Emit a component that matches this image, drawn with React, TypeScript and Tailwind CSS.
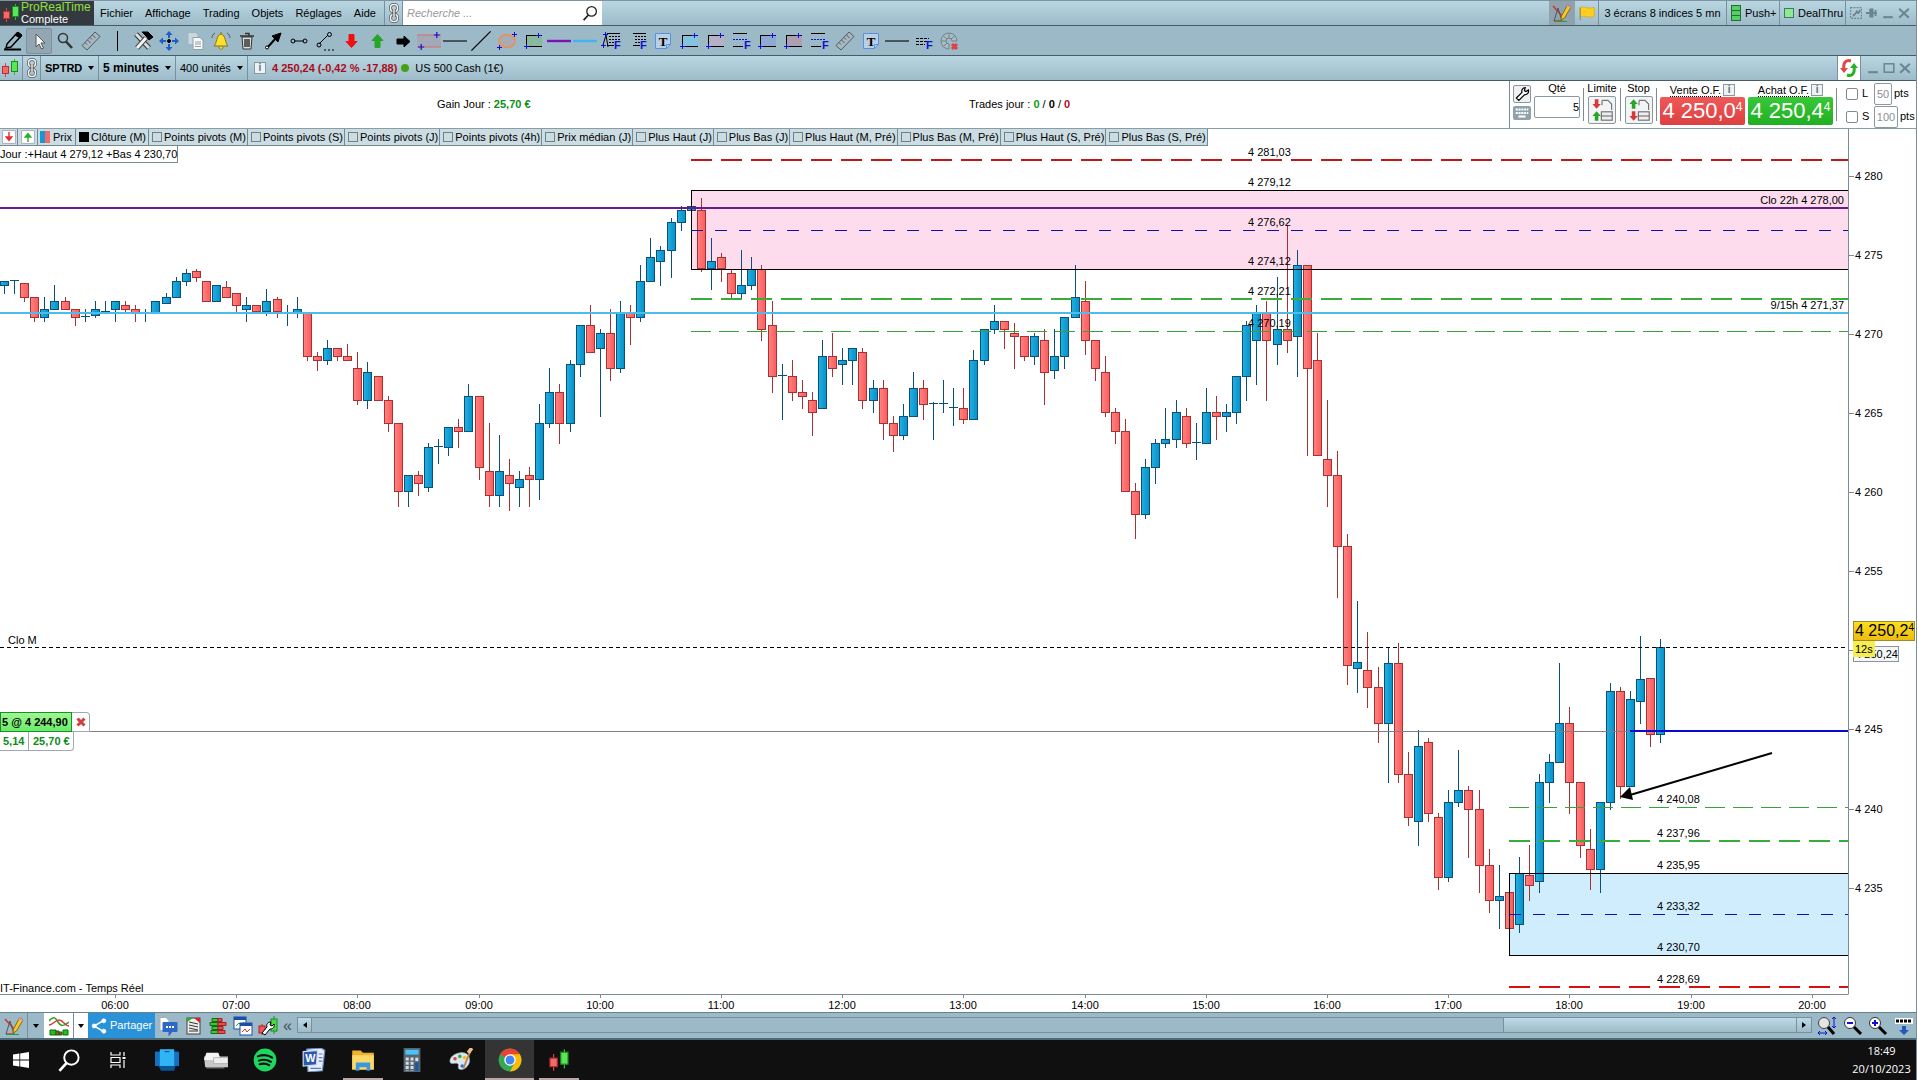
import type { ReactNode } from "react";

/* ---------- chart data ---------- */

interface Candle {
  up: boolean;
  high: number;
  top: number;
  bottom: number;
  low: number;
}

// Each entry: direction, high, body top, body bottom, low (in thirds of a pixel below the origin)
const SESSIONS = [
  {
    origin: 44,
    bars: `B 273 273 287 311,B 273 274 274 311,R 279 279 323 335,R 321 321 383 395,B 321 357 383 395,B 285 333 359 359,
R 321 333 359 359,R 357 357 383 407,B 357 382 382 395,B 333 357 377 383,B 333 365 365 365,B 333 333 359 395,
R 333 345 359 365,R 345 357 368 395,B 357 368 368 395,B 333 333 368 368,B 309 321 341 341,B 261 273 323 323,
B 237 249 275 287,R 237 243 263 275,R 273 273 335 335,B 285 285 335 335,R 273 291 323 323,R 309 309 347 367,
B 321 345 359 395,R 345 345 367 367,B 297 333 367 377,R 321 327 367 383,B 345 369 369 407,B 321 357 369 383,
R 369 370 500 512,R 486 498 512 542,B 450 474 512 524,R 474 474 500 512,R 462 498 512 512,R 486 534 632 644,
B 516 546 632 656,R 558 558 632 632,R 618 630 701 725,R 699 699 905 950,B 855 855 905 950,R 843 855 881 917,
B 759 771 893 905,B 747 772 772 822,B 711 711 773 797,R 687 711 725 773,B 582 618 725 725,R 618 618 833 869,
R 699 843 917 950,B 735 843 917 950,R 807 855 881 962,B 843 867 893 950,R 831 855 869 950,B 642 699 869 929,
B 534 606 701 713,R 582 606 701 761,B 510 522 701 725,B 405 405 524 560,R 345 405 488 488,B 417 429 476 680,
R 357 429 536 572,B 333 369 536 548,R 345 369 383 464,B 225 273 383 395,B 144 201 275 275`,
  },
  {
    origin: 4,
    bars: `B 288 300 335 407,B 204 216 302 383,B 168 180 218 242,B 168 168 182 182,R 144 180 358 365,B 264 333 358 419,
R 309 321 358 395,R 359 369 431 444,B 300 405 431 444,B 321 358 407 419,R 345 358 539 572,R 453 525 680 728,
B 642 679 679 809,R 630 678 728 752,R 690 726 740 776,R 726 750 788 857,B 570 618 776 776,R 549 618 656 680,
B 594 630 644 704,B 594 594 632 704,R 594 606 752 776,B 690 714 752 788,R 690 714 821 869,R 798 819 857 905,
B 762 798 857 869,B 666 714 800 800,R 690 714 764 809,B 756 763 763 869,B 690 763 763 788,B 714 774 774 827,
R 714 774 809 821,B 600 630 809 809,B 537 537 632 644,B 465 513 539 551,R 513 513 539 596,R 519 549 560 656,
R 558 558 620 632,B 549 558 620 644,R 537 570 668 764,B 537 618 662 686,B 501 501 620 656,B 345 441 503 503,
R 393 453 572 614,R 570 570 656 692,R 618 666 788 800,R 774 786 845 881,R 807 843 1025 1025,R 999 1023 1094 1166,
B 927 951 1094 1106,B 867 879 953 1001,B 774 867 881 893,B 750 786 869 893,R 774 798 881 893,B 819 880 880 929,
B 714 786 881 881,R 738 786 800 869,B 762 786 800 845,B 678 678 788 821,B 513 525 680 752,B 465 489 572 704,
R 453 489 572 752,B 381 537 584 644,R 225 537 572 608,B 300 345 560 680,R 345 345 656 917,R 549 630 917 917,
R 750 927 977 1070,R 903 975 1190 1343,R 1152 1188 1547 1605`,
  },
  {
    origin: 394,
    bars: `B 182 366 386 459,R 276 390 443 503,R 380 441 551 608,B 321 369 551 728,R 309 369 704 728,R 636 702 833 857,
B 570 618 845 917,R 594 606 821 845,R 819 831 1013 1049,B 750 786 1013 1025,B 630 750 788 800,R 738 750 809 953,
R 750 807 977 1058,R 927 975 1082 1118,B 975 1068 1082 1166,R 1056 1056 1166 1166,B 951 1000 1154 1178,
R 915 1005 1037 1082,B 702 726 1025 1058,B 642 666 728 788,B 369 549 668 668,R 501 549 728 821,R 726 726 917 953,
R 867 927 989 1049,B 786 786 989 1058,B 429 453 788 809,R 441 453 740 776,B 453 477 740 740,B 288 417 485 551,
R 414 414 584 620,B 297 321 584 608`,
  },
];

const CANDLES: Candle[] = SESSIONS.flatMap(({ origin, bars }) =>
  bars.split(",").map((bar) => {
    const [dir, ...values] = bar.trim().split(" ");
    const [high, top, bottom, low] = values.map((v) => Math.round(origin + Number(v) / 3));
    return { up: dir === "B", high, top, bottom, low };
  })
);

const PX_PER_POINT = 15.805;
const priceY = (price: number) => Math.round((4280 - price) * PX_PER_POINT + 30.3);
const candleX = (i: number) => Math.floor(4.4 + i * 10.1);

const PRICE_TICKS = [4280, 4275, 4270, 4265, 4260, 4255, 4250, 4245, 4240, 4235];
const HOURS = ["06:00", "07:00", "08:00", "09:00", "10:00", "11:00", "12:00", "13:00", "14:00", "15:00", "16:00", "17:00", "18:00", "19:00", "20:00"];

interface Level {
  price: number;
  label: string;
  color: string;
  width: number;
  dash?: string;
}

const UPPER_LEVELS: Level[] = [
  { price: 4281.03, label: "4 281,03", color: "#c01818", width: 2, dash: "21 9" },
  { price: 4279.12, label: "4 279,12", color: "#000", width: 1 },
  { price: 4276.62, label: "4 276,62", color: "#1010b0", width: 1, dash: "12 12" },
  { price: 4274.12, label: "4 274,12", color: "#000", width: 1 },
  { price: 4272.21, label: "4 272,21", color: "#3aac3a", width: 2, dash: "21 9" },
  { price: 4270.19, label: "4 270,19", color: "#3aa03a", width: 1, dash: "20 8" },
];

const LOWER_LEVELS: Level[] = [
  { price: 4240.08, label: "4 240,08", color: "#3aa03a", width: 1, dash: "20 8" },
  { price: 4237.96, label: "4 237,96", color: "#3aac3a", width: 2, dash: "21 9" },
  { price: 4235.95, label: "4 235,95", color: "#000", width: 1 },
  { price: 4233.32, label: "4 233,32", color: "#1010b0", width: 1, dash: "12 12" },
  { price: 4230.7, label: "4 230,70", color: "#000", width: 1 },
  { price: 4228.69, label: "4 228,69", color: "#d81010", width: 2, dash: "21 9" },
];

/* ---------- chart ---------- */

const CandleShape = ({ candle, x }: { candle: Candle; x: number }) => {
  const line = candle.up ? "#0b5078" : "#a83232";
  return (
    <g stroke={line}>
      <line x1={x + 0.5} x2={x + 0.5} y1={candle.high} y2={candle.low} />
      {candle.top === candle.bottom ? (
        <line x1={x - 4} x2={x + 5} y1={candle.top - 0.5} y2={candle.top - 0.5} />
      ) : (
        <rect
          x={x - 3.5}
          y={candle.top + 0.5}
          width={8}
          height={Math.max(2, candle.bottom - candle.top - 1)}
          fill={candle.up ? "url(#up)" : "url(#down)"}
        />
      )}
    </g>
  );
};

const Levels = ({ levels, x, labelX }: { levels: Level[]; x: number; labelX: number }) => (
  <>
    {levels.map(({ price, label, color, width, dash }) => {
      const y = priceY(price) + (width === 1 ? 0.5 : 0);
      return (
        <g key={label}>
          <line x1={x} x2="100%" y1={y} y2={y} stroke={color} strokeWidth={width} strokeDasharray={dash} />
          <text x={labelX} y={priceY(price) - 4}>
            {label}
          </text>
        </g>
      );
    })}
  </>
);

const PricePlot = () => (
  <svg className="block min-h-0 w-full flex-1 text-[11px]">
    <defs>
      <linearGradient id="up">
        <stop offset="0" stopColor="#22b0e2" />
        <stop offset="1" stopColor="#0690c8" />
      </linearGradient>
      <linearGradient id="down">
        <stop offset="0" stopColor="#ff8282" />
        <stop offset="1" stopColor="#fb5c5c" />
      </linearGradient>
    </defs>
    <rect x={691} y={priceY(4279.12)} width="100%" height={priceY(4274.12) - priceY(4279.12)} fill="#fddcee" />
    <rect x={1509} y={priceY(4235.95)} width="100%" height={priceY(4230.7) - priceY(4235.95)} fill="#cfedfd" />
    {CANDLES.map((candle, i) => (
      <CandleShape key={i} candle={candle} x={candleX(i)} />
    ))}
    <line x1={691.5} x2={691.5} y1={priceY(4279.12)} y2={priceY(4274.12)} stroke="#000" />
    <line x1={1509.5} x2={1509.5} y1={priceY(4235.95)} y2={priceY(4230.7)} stroke="#000" />
    <Levels levels={UPPER_LEVELS} x={691} labelX={1248} />
    <Levels levels={LOWER_LEVELS} x={1509} labelX={1657} />
    <line x1="0" x2="100%" y1={priceY(4278)} y2={priceY(4278)} stroke="#6a1a8a" strokeWidth="2" />
    <line x1="0" x2="100%" y1={priceY(4271.37)} y2={priceY(4271.37)} stroke="#4cbcec" strokeWidth="2" />
    <line x1="0" x2="100%" y1="501.5" y2="501.5" stroke="#000" strokeDasharray="4 3" />
    <line x1="0" x2="100%" y1="585.5" y2="585.5" stroke="#808080" />
    <line x1="1630" x2="100%" y1="585" y2="585" stroke="#0808d8" strokeWidth="2" />
    <line x1="1772" y1="607" x2="1630" y2="649" stroke="#000" strokeWidth="2" />
    <path d="M1620 651l10-10 3 13z" />
    <text x="8" y="498">
      Clo M
    </text>
    <svg x="100%" className="overflow-visible" textAnchor="end">
      <text x="-4" y="58">
        Clo 22h 4 278,00
      </text>
      <text x="-4" y="163">
        9/15h 4 271,37
      </text>
    </svg>
  </svg>
);

const PriceAxis = () => (
  <div className="relative flex w-[68px] flex-col border-b border-l border-[#7c8c92] border-b-white text-[11px]">
    <svg className="block min-h-0 w-full flex-1">
      {PRICE_TICKS.map((price) => {
        const y = priceY(price) + 17;
        return (
          <g key={price}>
            <line x1="0" x2="5" y1={y + 0.5} y2={y + 0.5} stroke="#7c8c92" />
            {price !== 4250 && (
              <text x="6" y={y + 4}>
                {`4 ${price - 4000}`}
              </text>
            )}
          </g>
        );
      })}
    </svg>
    <div className="absolute top-[517px] left-1 flex h-4 w-[46px] justify-end border border-[#8c9498] bg-[#f4f6f8] leading-[14px] whitespace-nowrap">4 250,24</div>
    <div className="absolute top-[512px] left-1 h-4 w-[22px] bg-[#f6ee50] pl-0.5 leading-4">12s</div>
    <div className="absolute top-[492px] left-1 flex h-5 w-[62px] border border-[#9a8a30] bg-linear-to-b from-[#fbe01c] to-[#eebc10] pl-px text-base leading-[18px]">
      4 250,2<span className="text-[10px] leading-3">4</span>
    </div>
  </div>
);

const TimeAxis = () => (
  <div className="h-[18px] shrink-0 border-b border-[#6c8088] bg-white">
    <svg className="block h-full w-full text-[11px]" textAnchor="middle">
      {HOURS.map((hour, i) => {
        const x = candleX(11 + i * 12);
        return (
          <g key={hour}>
            <line x1={x + 0.5} x2={x + 0.5} y1="0" y2="3" stroke="#7c8c92" />
            <text x={x} y="14">
              {hour}
            </text>
          </g>
        );
      })}
    </svg>
  </div>
);

/* ---------- icons ---------- */

const Svg = ({ children, size = "h-5 w-5" }: { children: ReactNode; size?: string }) => (
  <svg viewBox="0 0 20 20" fill="none" stroke="#000" className={`${size} shrink-0`}>
    {children}
  </svg>
);

const CandlesIcon = ({ size }: { size?: string }) => (
  <Svg size={size}>
    <path d="M5.5 5v14" stroke="#e04040" />
    <path d="M14.5 1v16" stroke="#30b830" />
    <rect x="2.5" y="8.5" width="6" height="7" fill="#f46a6a" stroke="#b83030" />
    <rect x="11.5" y="3.5" width="6" height="10" fill="#5ae65a" stroke="#1c8c1c" />
  </Svg>
);

const ChainIcon = () => (
  <svg viewBox="0 0 12 20" fill="none" className="h-5 w-3 shrink-0">
    <rect x="2.5" y="1.5" width="7" height="7" rx="3" stroke="#555" strokeWidth="3" />
    <rect x="2.5" y="11.5" width="7" height="7" rx="3" stroke="#555" strokeWidth="3" />
    <rect x="2.5" y="1.5" width="7" height="7" rx="3" stroke="#f2f2f2" strokeWidth="1.5" />
    <rect x="2.5" y="11.5" width="7" height="7" rx="3" stroke="#f2f2f2" strokeWidth="1.5" />
    <path d="M6 6v8" stroke="#444" strokeWidth="3" />
    <path d="M6 6v8" stroke="#eee" strokeWidth="1.5" />
  </svg>
);

const DrawIcon = () => (
  <Svg>
    <path d="M1 3l10 11M2 18h8" stroke="#d83030" strokeWidth="1.5" />
    <path d="M2 18L6 5l4 13" stroke="#555" />
    <path d="M2 18.5h13" stroke="#20a040" />
    <path d="M15.5 2l3.5 2-6.5 11-3.500 2 .5-4z" fill="#f8c828" stroke="#8a6a10" />
    <path d="M15.5 2l3.5 2-1 1.500L14.500 4z" fill="#f0a0a0" stroke="none" />
  </Svg>
);

const RulerIcon = () => (
  <Svg>
    <path d="M1 14.5L14 1l5 4.500L6 19z" fill="#a8b8c0" stroke="#4f5c64" />
    <path d="M4 11.5l2 2M6.500 9l3 3M9 6.500l2 2M11.500 4l3 3" stroke="#4f5c64" />
  </Svg>
);

const TextNoteIcon = () => (
  <Svg>
    <path d="M2.5 2.500h15v11l-4 4h-11z" fill="#b9cfe6" stroke="#5a90e0" />
    <path d="M13.5 17.500v-4h4" stroke="#5a90e0" />
    <text x="10" y="14.5" textAnchor="middle" fontSize="13" fontWeight="bold" fill="#000" stroke="none" fontFamily="Liberation Serif, serif">
      T
    </text>
  </Svg>
);

const BoxIcon = ({ fill }: { fill: string }) => (
  <Svg>
    <rect x="3" y="4" width="16" height="11" fill={fill} stroke="none" />
    <path d="M3 4.5h16M3 15.500h16M3.500 4v9" />
    <path d="M3.5 13v5M1 15.500h5M15.500 2v5M13 4.500h5" stroke="#1010d0" />
  </Svg>
);

const FMark = () => (
  <text x="13" y="18" fontSize="11" fontWeight="bold" fill="#1010d0" stroke="none">
    F
  </text>
);

const LinesFIcon = () => (
  <Svg>
    <path d="M2 2.5h14M2 15.500h10" />
    <path d="M2 8.5h15" stroke="#1010d0" strokeDasharray="2 1" />
    <FMark />
  </Svg>
);

const TextFIcon = ({ anchor }: { anchor?: boolean }) => (
  <Svg>
    <path d="M6 2.5h13M6 14.500h7" />
    <path d="M8 5.5h11M8 8.500h11M8 11.500h5" strokeDasharray="2 1" />
    {anchor && <path d="M2 14l3-10 2 12" />}
    {anchor && <path d="M2.5 12v5M0 14.500h5M4.500 1v5M2 3.500h5" stroke="#1010d0" />}
    <FMark />
  </Svg>
);

const BlockArrow = ({ fill, d }: { fill: string; d: string }) => (
  <Svg>
    <path d={d} fill={fill} stroke={fill} />
  </Svg>
);

const Stroke = ({ color, width }: { color: string; width: number }) => (
  <Svg size="h-6 w-6">
    <path d="M0 10h20" stroke={color} strokeWidth={width} />
  </Svg>
);

const DRAW_TOOLS: [string, ReactNode][] = [
  ["Crayon", <Svg><path d="M4 13L14 2l4 3L8 16l-5 1z" fill="#9bbac8" strokeWidth="1.5" /><path d="M12 4l3-3 4 3-2 3z" fill="#000" /><path d="M1 18.5h17" strokeWidth="2" /></Svg>],
  ["Curseur", <Svg><path d="M7 3v13l3-3 2.500 5 2-1-2.500-5h4z" fill="#f4f4f4" stroke="#555" /></Svg>],
  ["Loupe", <Svg><circle cx="8" cy="7" r="4.5" stroke="#333" strokeWidth="1.5" /><path d="M11 10.5l6 6.500" stroke="#333" strokeWidth="2.5" /></Svg>],
  ["Règle", <RulerIcon />],
  ["Séparateur", <Svg><path d="M10.5 0v20" /></Svg>],
  ["Outils", <Svg><path d="M3 3l13 14" stroke="#333" strokeWidth="5" /><path d="M3 3l13 14" stroke="#ddd" strokeWidth="3" /><path d="M13 7L4 17" stroke="#444" strokeWidth="5" /><path d="M13 7L4 17" stroke="#f4f4f4" strokeWidth="3" /><path d="M9 1h6l5 5-4 3-3-4z" fill="#000" /></Svg>],
  ["Déplacer", <Svg><path d="M10 7V3M10 13v4M7 10H3M13 10h4" stroke="#1a60c8" strokeWidth="2" /><path d="M10 0l3.500 4h-7zM10 20l3.500-4h-7zM0 10l4-3.500v7zM20 10l-4-3.500v7z" fill="#1a60c8" stroke="none" /><circle cx="10" cy="10" r="1.5" fill="#000" /></Svg>],
  ["Copier", <Svg><path d="M3 1.5h8l2 2v10H3z" fill="#c8d8e0" stroke="#a0b4be" /><path d="M8 6.500h7l3 3v9H8z" fill="#f8f8f8" stroke="#90a0a8" /><path d="M10 11h6M10 13h6M10 15.500h6" stroke="#90a0a8" /></Svg>],
  ["Alerte", <Svg><path d="M3 15c3-2 2-11 7-12 5 1 4 10 7 12z" fill="#ffe030" stroke="#8a7410" /><path d="M8 16c0 3 4 3 4 0M10 1v2" fill="#ffe030" stroke="#8a7410" /><path d="M4 2C2 3 1 5 1 7M16 2c2 1 3 3 3 5" stroke="#555" /></Svg>],
  ["Supprimer", <Svg><path d="M5 6h10l-1 12H6z" fill="#ddd" stroke="#333" /><path d="M3 5h14M8 2.500h4V5M8 8v8M10 8v8M12 8v8" stroke="#333" strokeWidth="1.5" /></Svg>],
  ["Flèche", <Svg><path d="M4 17L13 7" strokeWidth="2" /><path d="M9 5l9-3-3 9z" fill="#000" /><circle cx="4" cy="16.5" r="1.5" fill="#fff" /></Svg>],
  ["Segment", <Svg><path d="M5 10h10" /><circle cx="4" cy="10" r="2" /><circle cx="16" cy="10" r="2" /></Svg>],
  ["Segment prolongé", <Svg><path d="M4 13l9-9" /><circle cx="14.5" cy="3.5" r="2" /><circle cx="4" cy="14" r="2" /><path d="M9 19h10" strokeDasharray="2 2" /></Svg>],
  ["Flèche bas", <BlockArrow fill="#ee1010" d="M8 3.5h5v7h3L10.500 16.500 5 10.500h3z" />],
  ["Flèche haut", <BlockArrow fill="#28a428" d="M8 16.5h5v-7h3L10.500 3.500 5 9.500h3z" />],
  ["Flèche droite", <BlockArrow fill="#000" d="M4 8h7V5l6 5.500-6 5.500v-3H4z" />],
  ["Fibonacci", <Svg size="h-6 w-6"><rect x="0" y="5" width="20" height="10" fill="#a3a9b9" stroke="none" /><path d="M0 5h20M0 15h20" stroke="#e06a6a" /><path d="M1 15h5M3.500 12.500v5M14 5h5M16.500 2.500v5" stroke="#1010d0" /></Svg>],
  ["Horizontale", <Stroke color="#111" width={1} />],
  ["Droite", <Svg size="h-6 w-6"><path d="M2 18L18 2" /></Svg>],
  ["Ellipse", <Svg><ellipse cx="10" cy="10" rx="8" ry="6.5" fill="#a9adb0" stroke="#f08a58" strokeWidth="1.5" /><path d="M0 16.5h5M2.500 14v5M15 3.500h5M17.500 1v5" stroke="#1010d0" /></Svg>],
  ["Rectangle vert", <BoxIcon fill="#88b8a0" />],
  ["Ligne violette", <Stroke color="#7a14b4" width={2} />],
  ["Ligne bleue", <Stroke color="#44b4f0" width={2} />],
  ["Texte ancré", <TextFIcon anchor />],
  ["Texte F", <TextFIcon />],
  ["Texte", <TextNoteIcon />],
  ["Rectangle cyan", <BoxIcon fill="#84c4e0" />],
  ["Rectangle rose", <BoxIcon fill="#b8b0c8" />],
  ["Lignes F", <LinesFIcon />],
  ["Rectangle bleu", <BoxIcon fill="#90a8d4" />],
  ["Rectangle mauve", <BoxIcon fill="#aca0b0" />],
  ["Lignes F2", <LinesFIcon />],
  ["Mesure", <RulerIcon />],
  ["Texte 2", <TextNoteIcon />],
  ["Horizontale 2", <Stroke color="#111" width={1} />],
  ["Lignes F3", <Svg><path d="M3 7.5h13M3 10.500h11M3 13.500h9" strokeDasharray="3 1" /><FMark /></Svg>],
  ["Annuler", <Svg><path d="M10 18a8 8 0 1 1 8-8h-5a3 3 0 1 0-3 3z" fill="#a8bcc4" stroke="#71858e" /><path d="M2 10h5M4 4.500l4 3.500M10 2v5M16 4.500l-4 3.500M4 16l4-4" stroke="#71858e" /><path d="M13 13l5 5M18 13l-5 5" stroke="#e04040" strokeWidth="3" /></Svg>],
];

const Caret = () => <span className="border-x-[3px] border-t-4 border-x-transparent border-t-black" />;

const InfoIcon = () => (
  <span className="inline-block h-3 w-3 border border-[#8c98a0] bg-[#eef2f4] text-center text-[10px] leading-[10px] font-bold text-[#60707c]">i</span>
);

const CloseIcon = () => (
  <Svg size="h-3 w-3">
    <path d="M2 3l16 15M18 3L2 18" stroke="#6b8490" strokeWidth="3.5" />
  </Svg>
);

const MinIcon = () => (
  <Svg size="h-3 w-3">
    <path d="M2 17h16" stroke="#6b8490" strokeWidth="3.5" />
  </Svg>
);

const SearchIcon = ({ size, color }: { size: string; color: string }) => (
  <Svg size={size}>
    <circle cx="12" cy="8" r="6" stroke={color} strokeWidth="1.6" />
    <path d="M8 12.5L2 19" stroke={color} strokeWidth="2.2" />
  </Svg>
);

/* ---------- top bars ---------- */

const MENU = ["Fichier", "Affichage", "Trading", "Objets", "Réglages", "Aide"];

const MenuBar = () => (
  <header className="flex h-[26px] shrink-0 border-t border-b border-[#465d69] border-t-[#8094a0] bg-linear-to-b from-[#b9d7e3] to-[#9dbbc8]">
    <div className="flex w-[94px] items-center bg-[#33393f] pl-px">
      <CandlesIcon />
      <div className="leading-3">
        <div className="text-xs leading-3 text-[#8ee03c]">ProRealTime</div>
        <div className="leading-3 text-white">Complete</div>
      </div>
    </div>
    <nav className="flex w-[290px] items-center gap-3 pl-1.5">
      {MENU.map((item) => (
        <button key={item}>{item}</button>
      ))}
    </nav>
    <div className="flex w-[19px] items-center justify-center border-x border-[#78909c]">
      <ChainIcon />
    </div>
    <label className="flex w-[199px] items-center bg-white px-1">
      <input aria-label="Recherche" placeholder="Recherche ..." className="w-full min-w-0 flex-1 italic outline-none placeholder:text-[#9a9a9a]" />
      <SearchIcon size="h-4 w-4" color="#222" />
    </label>
    <div className="ml-auto flex items-stretch">
      <button aria-label="Dessiner" className="flex w-[26px] items-center justify-center bg-[#8ea3ae]">
        <DrawIcon />
      </button>
      <button aria-label="Drapeau" className="flex w-6 items-center justify-center border-r border-[#78909c]">
        <Svg size="h-4 w-4">
          <path d="M1 4c5-4 8 2 18-1v11c-8 3-12-2-17 1z" fill="#fccf20" stroke="#e8a810" />
          <path d="M1.5 3v16" stroke="#777" />
        </Svg>
      </button>
      <button className="w-32 border-r border-[#78909c]">3 écrans 8 indices 5 mn</button>
      <button className="flex w-[53px] items-center gap-1 border-r border-[#78909c] pl-1">
        <span className="flex h-4 w-2.5 flex-col divide-y divide-[#2a6a3a] border border-[#2a6a3a] bg-[#52d060]">
          <i className="flex-1" />
          <i className="flex-1" />
          <i className="flex-1" />
        </span>
        Push+
      </button>
      <button className="flex w-[66px] items-center gap-1 border-r border-[#78909c] pl-1">
        <span className="h-2.5 w-2.5 border border-[#3c7c60] bg-[#90e890]" />
        DealThru
      </button>
      <div className="flex w-[70px] items-center gap-1 pl-1">
        <Svg size="h-3 w-3">
          <rect x="1" y="1" width="18" height="18" stroke="#6b8490" strokeWidth="2" strokeDasharray="3 2" />
          <path d="M5 15l6-6M10 6l4 4 3-5" stroke="#6b8490" strokeWidth="3" />
        </Svg>
        <Svg size="h-3 w-3">
          <path d="M0 10h8M7 4h4v12H7zM10 10h8M16 5v10" fill="#6b8490" stroke="#6b8490" strokeWidth="3" />
        </Svg>
        <MinIcon />
        <CloseIcon />
      </div>
    </div>
  </header>
);

const DrawingToolbar = () => (
  <div className="flex h-[30px] shrink-0 items-center border-b border-[#465d69] bg-[#9bb9c7]">
    {DRAW_TOOLS.map(([name, icon]) => (
      <button
        key={name}
        aria-label={name}
        className={
          name === "Curseur"
            ? "flex h-[26px] w-[26px] items-center justify-center rounded-xs border border-[#7d919c] bg-[#93a7b2]"
            : "flex h-[26px] w-[26px] items-center justify-center"
        }
      >
        {icon}
      </button>
    ))}
  </div>
);

const SymbolBar = () => (
  <div className="flex h-[25px] shrink-0 items-stretch border-b border-[#465d69] bg-linear-to-b from-[#b9d7e3] to-[#9dbbc8]">
    <div className="flex w-[23px] items-center border-r border-[#78909c]">
      <CandlesIcon />
    </div>
    <div className="flex w-[18px] items-center justify-center border-r border-[#78909c]">
      <ChainIcon />
    </div>
    <button className="flex w-[58px] items-center justify-between border-r border-[#78909c] px-1 font-bold">
      SPTRD <Caret />
    </button>
    <button className="flex w-[77px] items-center justify-between border-r border-[#78909c] px-1 text-xs font-bold">
      5 minutes <Caret />
    </button>
    <button className="flex w-[72px] items-center justify-between border-r border-[#78909c] px-1">
      400 unités <Caret />
    </button>
    <div className="flex items-center gap-1 pl-1.5">
      <InfoIcon />
      <span className="pl-0.5 font-bold text-[#a80c1c]">4 250,24 (-0,42 % -17,88)</span>
      <span className="mr-0.5 h-2 w-2 rounded-full bg-[#48a010]" />
      <span>US 500 Cash (1€)</span>
    </div>
    <div className="ml-auto flex w-6 items-center justify-center border-x border-[#78909c] bg-white">
      <Svg>
        <path d="M12 3c-6-2-8 3-7 8" stroke="#e04848" strokeWidth="3" />
        <path d="M1 10h8l-4 5z" fill="#e04848" stroke="none" />
        <path d="M8 17c6 2 8-3 7-8" stroke="#28b028" strokeWidth="3" />
        <path d="M11 10h8l-4-5z" fill="#28b028" stroke="none" />
      </Svg>
    </div>
    <div className="flex w-[55px] items-center gap-1 pl-1.5">
      <MinIcon />
      <Svg size="h-3 w-3">
        <rect x="2" y="3" width="16" height="14" stroke="#6b8490" strokeWidth="2.5" />
      </Svg>
      <CloseIcon />
    </div>
  </div>
);

/* ---------- order panel ---------- */

const OrderGlyph = ({ up, down }: { up: string; down: string }) => (
  <Svg size="h-6 w-6">
    <path d="M10 2h5l3 3v5M10 2v4" stroke="#777" />
    <rect x="9.5" y="11.5" width="9" height="7" fill="#eee" stroke="#777" />
    <path d="M9 15h10" stroke="#777" />
    <path d={up} fill="#28a428" stroke="none" />
    <path d={down} fill="#d83838" stroke="none" />
  </Svg>
);

const Divider = () => <span className="mt-[7px] h-[33px] w-px shrink-0 bg-[#7c8c92]" />;

interface QuoteProps {
  title: string;
  price: string;
  tone: string;
}

const QuoteButton = ({ title, price, tone }: QuoteProps) => (
  <div className="flex w-[85px] flex-col items-center pt-0.5">
    <div className="flex h-[14px] items-center gap-0.5">
      <span className="border-b border-dotted border-black leading-3">{title}</span>
      <InfoIcon />
    </div>
    <button className={`flex h-7 w-full justify-center rounded-xs text-[22px] leading-7 text-white ${tone}`}>
      {price}
      <span className="text-xs leading-5">4</span>
    </button>
  </div>
);

const LIMIT_ROWS = [
  { id: "L", value: "50", width: "w-[18px]" },
  { id: "S", value: "100", width: "w-6" },
];

const InfoPanel = () => (
  <section className="flex h-12 shrink-0 border-b border-[#8c9ca4] bg-white">
    <div className="flex flex-1 items-center pl-[437px]">
      <span className="w-[532px]">
        Gain Jour : <b className="text-[#0c9018]">25,70 €</b>
      </span>
      <span>
        Trades jour : <b className="text-[#0ca018]">0</b> / <b>0</b> / <b className="text-[#b01020]">0</b>
      </span>
    </div>
    <div className="flex w-[407px] border-l border-[#7c8c92] pl-[3px]">
      <div className="flex flex-col gap-[3px] pt-1">
        <button aria-label="Options" className="flex h-[18px] w-[18px] items-center justify-center rounded-xs border border-[#8c98a0] bg-[#eef0f2]">
          <Svg size="h-4 w-4">
            <path d="M3 15l7-7c-1-3 1-6 4-6l-1 4 2 1 3-2c1 4-2 6-5 6l-7 7z" fill="#fff" strokeWidth="1.5" />
          </Svg>
        </button>
        <span className="flex h-3.5 w-[18px] items-center justify-center rounded-xs bg-[#8fa2ac]">
          <Svg size="h-3.5 w-4">
            <path d="M1 5h18M1 10h18" stroke="#fff" strokeWidth="3" strokeDasharray="3 1" />
            <path d="M5 15h10" stroke="#fff" strokeWidth="3" />
          </Svg>
        </span>
      </div>
      <label className="ml-[3px] flex w-[46px] flex-col items-center">
        <span className="leading-[15px]">Qté</span>
        <input defaultValue="5" className="h-[22px] w-full rounded-xs border border-[#8c98a0] text-right" />
      </label>
      <div className="flex w-[4px] justify-end">
        <Divider />
      </div>
      <div className="flex w-9 flex-col items-center">
        <span className="leading-[15px]">Limite</span>
        <button aria-label="Ordre limite" className="flex h-7 w-7 items-center justify-center rounded-xs border border-[#8c98a0] bg-[#f2f4f5]">
          <OrderGlyph down="M4 1h3v4h2L5.5 9 2 5h2z" up="M4 19h3v-4h2L5.5 11 2 15h2z" />
        </button>
      </div>
      <Divider />
      <div className="flex w-[35px] flex-col items-center">
        <span className="leading-[15px]">Stop</span>
        <button aria-label="Ordre stop" className="flex h-7 w-7 items-center justify-center rounded-xs border border-[#8c98a0] bg-[#f2f4f5]">
          <OrderGlyph up="M4 9h3V5h2L5.5 1 2 5h2z" down="M4 11h3v4h2l-3.5 4L2 15h2z" />
        </button>
      </div>
      <Divider />
      <div className="flex gap-[3px] px-[3px]">
        <QuoteButton title="Vente O.F." price="4 250,0" tone="bg-linear-to-b from-[#f05858] to-[#dc4040]" />
        <QuoteButton title="Achat O.F." price="4 250,4" tone="bg-linear-to-b from-[#38c838] to-[#22ae22]" />
      </div>
      <Divider />
      <div className="flex flex-col pt-px pl-[9px]">
        {LIMIT_ROWS.map(({ id, value, width }) => (
          <div key={id} className="flex h-[23px] items-center gap-0.5">
            <input type="checkbox" id={`use-${id}`} className="h-3 w-3 appearance-none rounded-xs border border-[#7c8c92]" />
            <label htmlFor={`use-${id}`} className="w-3 pl-0.5">
              {id}
            </label>
            <input aria-label={`${id} points`} defaultValue={value} className={`h-[22px] rounded-xs border border-[#8c98a0] text-center text-[#8a8f94] ${width}`} />
            pts
          </div>
        ))}
      </div>
    </div>
  </section>
);

/* ---------- legend ---------- */

const INDICATORS = [
  "Points pivots (M)",
  "Points pivots (S)",
  "Points pivots (J)",
  "Points pivots (4h)",
  "Prix médian (J)",
  "Plus Haut (J)",
  "Plus Bas (J)",
  "Plus Haut (M, Pré)",
  "Plus Bas (M, Pré)",
  "Plus Haut (S, Pré)",
  "Plus Bas (S, Pré)",
];

const Legend = () => (
  <div className="flex h-[17px] shrink-0">
    <div className="flex divide-x divide-[#748890] border-r border-b border-[#748890] bg-[#ccdce3] whitespace-nowrap">
      <button aria-label="Vendre" className="flex w-[18px] items-center justify-center">
        <Svg size="h-3.5 w-3.5">
          <rect x="1" y="1" width="18" height="18" fill="#fff" stroke="#99a" />
          <path d="M10 3v8M6 10l4 5 4-5z" fill="#e03030" stroke="#e03030" strokeWidth="2" />
        </Svg>
      </button>
      <button aria-label="Acheter" className="flex w-5 items-center justify-center">
        <Svg size="h-3.5 w-3.5">
          <rect x="1" y="1" width="18" height="18" fill="#fff" stroke="#99a" />
          <path d="M10 17V9M6 10l4-5 4 5z" fill="#28b028" stroke="#28b028" strokeWidth="2" />
        </Svg>
      </button>
      <div className="flex w-[38px] items-center gap-[3px] pl-0.5">
        <span className="flex h-3 w-2.5 border-l-[5px] border-[#1898d0] bg-[#f46a6a]" />
        Prix
      </div>
      <div className="flex w-[73px] items-center gap-0.5 pl-[3px]">
        <span className="h-2.5 w-2.5 bg-black" />
        Clôture (M)
      </div>
      {INDICATORS.map((name) => (
        <label key={name} className="flex items-center gap-0.5 pr-px pl-[3px]">
          <input type="checkbox" className="h-2.5 w-2.5 appearance-none border border-[#708088]" />
          {name}
        </label>
      ))}
    </div>
  </div>
);

/* ---------- bottom bars ---------- */

const ChartToolbar = () => (
  <div className="flex h-[27px] shrink-0 items-stretch border-b-2 border-[#4d6a78] bg-[#9bb9c7]">
    <button aria-label="Dessiner" className="flex w-7 items-center justify-center border-r border-[#78909c]">
      <DrawIcon />
    </button>
    <button aria-label="Options dessin" className="flex w-4 items-center justify-center">
      <Caret />
    </button>
    <button aria-label="Indicateurs" className="flex w-[30px] items-center justify-center border-r border-[#78909c] bg-white">
      <Svg>
        <path d="M0 5c4-5 6-4 9 1s6 4 11 0" stroke="#28a428" strokeWidth="1.5" />
        <path d="M0 9c4 0 6-5 10-5s6 6 10 6" stroke="#d83838" strokeWidth="1.5" />
        <path d="M1 14h6v5H1zM14 14h5v5h-5z" fill="#20c020" stroke="#0a6a0a" />
        <path d="M7 15h3v4H7zM10 16h3v3h-3z" fill="#d83838" stroke="#0a6a0a" />
      </Svg>
    </button>
    <button aria-label="Options indicateurs" className="flex w-3.5 items-center justify-center bg-white">
      <Caret />
    </button>
    <button className="flex w-[67px] items-center gap-[3px] bg-[#2a92d8] pl-[3px] text-white">
      <Svg size="h-4 w-4">
        <path d="M16 3L4 10l12 7" stroke="#fff" strokeWidth="2" />
        <circle cx="16" cy="3.5" r="2.5" fill="#fff" stroke="#fff" />
        <circle cx="4" cy="10" r="2.5" fill="#fff" stroke="#fff" />
        <circle cx="16" cy="16.5" r="2.5" fill="#fff" stroke="#fff" />
      </Svg>
      Partager
    </button>
    <div className="flex w-[142px] items-center gap-[5px] pl-[3px]">
      <Svg>
        <path d="M2 1.5h6l3 3v10H2z" fill="#fff" stroke="#aab" />
        <path d="M5 6.500h14v9h-5l-3 4v-4H5z" fill="#2c68c8" stroke="#2c68c8" />
        <path d="M8 11h8" stroke="#fff" strokeWidth="2" strokeDasharray="2 1" />
      </Svg>
      <Svg>
        <rect x="4" y="2" width="13" height="16" fill="#eee" stroke="#444" />
        <path d="M6 6l9 2M6 9l9 2M6 12l9 2M6 15h9" stroke="#333" />
        <path d="M4 2h6L4 6z" fill="#20b020" stroke="none" />
        <path d="M11 2h6v5z" fill="#d82020" stroke="none" />
      </Svg>
      <Svg>
        <path d="M4 2.5h6v3H4zM2 6.500h8v3H2zM4 10.500h6v3H4zM3 14.500h7v3H3z" fill="#38c838" stroke="#186818" />
        <path d="M10 2.5h4v3h-4zM10 6.500h8v3h-8zM10 10.500h5v3h-5zM10 14.500h7v3h-7z" fill="#e85050" stroke="#a02020" />
      </Svg>
      <Svg>
        <rect x="1" y="1" width="12" height="12" fill="#fff" stroke="#1c50a8" />
        <path d="M1 2.5h12" stroke="#1c50a8" strokeWidth="3" />
        <path d="M3 10l3-3 2 2 3-3" stroke="#28a428" />
        <rect x="7" y="7" width="12" height="12" fill="#fff" stroke="#1c50a8" />
        <path d="M7 8.5h12" stroke="#1c50a8" strokeWidth="3" />
        <path d="M9 16l3-3 2 3 3-3" stroke="#d83030" />
      </Svg>
      <Svg>
        <path d="M4 8v11" stroke="#d02020" />
        <rect x="1" y="10" width="6" height="7" fill="#f05a5a" stroke="#b02020" />
        <path d="M16 0v18" stroke="#1c8c1c" />
        <rect x="13" y="3" width="6" height="12" fill="#48d848" stroke="#1c8c1c" />
        <path d="M4 17l5-6c-1-3 1-5 4-5l-1 3 2 1 2-2c1 4-2 5-4 5l-5 6z" fill="#fff" />
      </Svg>
      <button aria-label="Replier" className="text-base leading-4 text-[#41525c]">
        «
      </button>
    </div>
    <div className="mt-1 flex h-4 flex-1 items-stretch border border-[#78909c]">
      <button aria-label="Défiler à gauche" className="flex w-3.5 items-center justify-center border-r border-[#78909c] bg-linear-to-b from-[#bddbe7] to-[#9dbbc8]">
        <span className="border-y-[3px] border-r-4 border-y-transparent border-r-black" />
      </button>
      <div className="flex-1" />
      <div className="w-[294px] border-x border-[#78909c] bg-linear-to-b from-[#bddbe7] to-[#9dbbc8]" />
      <button aria-label="Défiler à droite" className="flex w-3.5 items-center justify-center bg-linear-to-b from-[#bddbe7] to-[#9dbbc8]">
        <span className="border-y-[3px] border-l-4 border-y-transparent border-l-black" />
      </button>
    </div>
    <div className="flex w-[104px] items-center justify-between pr-0.5 pl-[5px]">
      <Svg>
        <circle cx="7" cy="7" r="5.5" fill="#e4e4e4" stroke="#444" />
        <path d="M11 11l6 7" strokeWidth="3" />
        <path d="M17 1v11M15 3l2-2 2 2M15 10l2 2 2-2M1 17h9M3 15l-2 2 2 2M8 15l2 2-2 2" stroke="#1010d0" />
      </Svg>
      <Svg>
        <circle cx="7" cy="7" r="5.5" fill="#fff" stroke="#333" />
        <path d="M11 11l7 7" strokeWidth="3" />
        <path d="M4 7h6" stroke="#1010d0" strokeWidth="2" />
      </Svg>
      <Svg>
        <circle cx="7" cy="7" r="5.5" fill="#fff" stroke="#333" />
        <path d="M11 11l7 7" strokeWidth="3" />
        <path d="M4 7h6M7 4v6" stroke="#1010d0" strokeWidth="2" />
      </Svg>
      <Svg>
        <rect x="1" y="2" width="18" height="6" fill="#fff" stroke="none" />
        <path d="M2 5h16" strokeWidth="3" strokeDasharray="3 1" />
        <path d="M8 10h4v4h3l-5 5-5-5h3z" fill="#2458b8" stroke="none" />
      </Svg>
    </div>
  </div>
);

const TASKS: [string, ReactNode][] = [
  ["Recherche Windows", <SearchIcon size="h-6 w-6" color="#fff" />],
  ["Vue des tâches", <Svg><path d="M3 2v3h9V2M3 18v-3h9v3M3 7.500h9v5H3zM16 2v4M16 10v8" stroke="#fff" strokeWidth="1.2" /><path d="M14.5 7h3v2h-3z" fill="#fff" stroke="none" /></Svg>],
  ["Téléphone", <Svg size="h-6 w-6"><rect x="0" y="3" width="20" height="12" fill="#1470c0" stroke="none" /><path d="M4 1h12v14H4z" fill="#30b4f4" stroke="none" /><path d="M3 15h14l-1 4H5z" fill="#0c5498" stroke="none" /><path d="M8 3h4" stroke="#0c5498" /></Svg>],
  ["Imprimante", <Svg size="h-6 w-6"><path d="M0 7h20v9H1z" fill="#c8c8c8" stroke="none" /><path d="M2 4h10l2 6H0z" fill="#f4f4f4" stroke="none" /><path d="M8 8h12v5H8z" fill="#eee" stroke="#999" strokeWidth=".5" /><path d="M2 16.5h15" stroke="#888" /></Svg>],
  ["Spotify", <Svg size="h-6 w-6"><circle cx="10" cy="10" r="9.5" fill="#1ed760" stroke="none" /><path d="M4 7c4-1.500 9-1 12 1M5 10.500c3-1 7-.7 10 1M5.500 13.500c3-.8 6-.4 8 .8" strokeWidth="1.7" strokeLinecap="round" stroke="#101010" /></Svg>],
  ["Word", <Svg size="h-6 w-6"><path d="M4 1l12-1 3 2-2 17-12 1z" fill="#e8eefa" stroke="#6a88c0" /><path d="M1 3l12-1-1 12-11 1z" fill="#2c58ac" stroke="#cddcf4" /><text x="7" y="12" fontSize="9" fontWeight="bold" textAnchor="middle" fill="#fff" stroke="none">W</text><path d="M14 5h3M14 8h3M14 11h3M7 17h9" stroke="#5a7cc0" /></Svg>],
  ["Explorateur", <Svg size="h-6 w-6"><path d="M1 2h7l2 2h9v14H1z" fill="#f0b030" stroke="none" /><path d="M1 6h18v12H1z" fill="#fcd868" stroke="none" /><path d="M4 19v-7h12v7h-3v-3H7v3z" fill="#3a98e0" stroke="none" /></Svg>],
  ["Calculatrice", <Svg size="h-6 w-6"><rect x="3" y="0" width="14" height="20" fill="#586470" stroke="none" /><rect x="4.5" y="1.5" width="11" height="4" fill="#48c4f8" stroke="none" /><path d="M6 8v11M10 8v11" stroke="#d8dce0" strokeWidth="2.5" strokeDasharray="2.5 1" /><path d="M14 8v3" stroke="#d8dce0" strokeWidth="2.5" /><path d="M14 12v7" stroke="#1458a8" strokeWidth="2.5" /></Svg>],
  ["Paint", <Svg size="h-6 w-6"><path d="M9 4c6-1 9 3 8 8-2 6-8 7-9 5s1-3-1-4-5 1-6-1 1-7 8-8z" fill="#d8e8f0" stroke="#8ab" strokeWidth=".5" /><circle cx="5" cy="9" r="1.5" fill="#e04040" stroke="none" /><circle cx="9" cy="7" r="1.5" fill="#38a838" stroke="none" /><circle cx="13" cy="8" r="1.5" fill="#f0c020" stroke="none" /><circle cx="11" cy="15" r="1.5" fill="#3070d0" stroke="none" /><path d="M18 2l-6 15" stroke="#c08040" strokeWidth="1.5" /><path d="M16 4l3-4" stroke="#e8c090" strokeWidth="3" /></Svg>],
  ["Chrome", <Svg size="h-6 w-6"><circle cx="10" cy="10" r="9.5" fill="#34a853" stroke="none" /><path d="M10 10L1.8 5.2A9.500 9.500 0 0 1 18.200 5.200z" fill="#ea4335" stroke="none" /><path d="M10 5.2h8.200A9.500 9.500 0 0 1 10 19.500l4-7.200z" fill="#fbbc05" stroke="none" /><circle cx="10" cy="10" r="4.8" fill="#fff" stroke="none" /><circle cx="10" cy="10" r="3.7" fill="#4285f4" stroke="none" /></Svg>],
  ["ProRealTime", <CandlesIcon size="h-6 w-6" />],
];

const RUNNING = ["Explorateur", "Chrome", "ProRealTime"];

const Taskbar = () => (
  <footer className="flex h-10 shrink-0 items-stretch bg-[#101010] text-white">
    <button aria-label="Démarrer" className="flex w-11 items-center justify-center pr-0.5">
      <Svg size="h-4 w-4">
        <path d="M0 3l8-1v7.500H0zM9 2l11-2v9.500H9zM0 10.500h8V18l-8-1zM9 10.500h11V20L9 18z" fill="#fff" stroke="none" />
      </Svg>
    </button>
    {TASKS.map(([name, icon]) => (
      <button key={name} aria-label={name} className={`flex w-[49px] flex-col items-center ${name === "Chrome" ? "bg-[#343434]" : ""}`}>
        <span className="flex flex-1 items-center pt-0.5">{icon}</span>
        <span className={`h-0.5 ${name === "Chrome" ? "w-full" : "w-10"} ${RUNNING.includes(name) ? "bg-[#b8a8a8]" : ""}`} />
      </button>
    ))}
    <div className="ml-auto flex w-[69px] flex-col justify-center text-center font-['Open_Sans',sans-serif] leading-[18px]">
      <span>18:49</span>
      <span>20/10/2023</span>
    </div>
  </footer>
);

export default function App() {
  return (
    <div className="flex h-screen flex-col overflow-hidden border-r border-[#7c8c92] bg-white font-['Liberation_Sans',Arial,sans-serif] text-[11px] text-black">
      <MenuBar />
      <DrawingToolbar />
      <SymbolBar />
      <InfoPanel />
      <main className="flex min-h-0 flex-1">
        <div className="flex min-w-0 flex-1 flex-col border-b border-[#7c8c92]">
          <Legend />
          <div className="relative flex min-h-0 flex-1 flex-col">
            <PricePlot />
            <div className="absolute top-0 left-0 h-[17px] w-[178px] border-r border-b border-[#7c8c92] bg-white leading-4 whitespace-nowrap">
              Jour :+Haut 4 279,12 +Bas 4 230,70
            </div>
            <div className="absolute top-[566px] left-0 flex h-5 font-bold">
              <span className="w-[72px] border border-[#1c8c2c] bg-linear-to-b from-[#9cf890] to-[#68ec68] pl-px leading-[18px] whitespace-nowrap">5 @ 4 244,90</span>
              <button aria-label="Fermer la position" className="flex w-[18px] items-center justify-center rounded-tr-sm border border-l-0 border-[#a0a8b4] bg-white">
                <Svg size="h-2.5 w-2.5">
                  <path d="M3 3l14 14M17 3L3 17" stroke="#d04040" strokeWidth="6" />
                </Svg>
              </button>
            </div>
            <div className="absolute top-[586px] left-0 flex h-[19px] rounded-br-sm border-r border-b border-[#a0a8b4] bg-white leading-[18px] font-bold text-[#0c8c18]">
              <span className="w-[29px] border-r border-[#a0a8b4] pl-[3px]">5,14</span>
              <span className="w-11 pl-1 whitespace-nowrap">25,70 €</span>
            </div>
            <div className="absolute bottom-0 left-0 leading-3">IT-Finance.com - Temps Réel</div>
          </div>
        </div>
        <PriceAxis />
      </main>
      <TimeAxis />
      <ChartToolbar />
      <Taskbar />
    </div>
  );
}
